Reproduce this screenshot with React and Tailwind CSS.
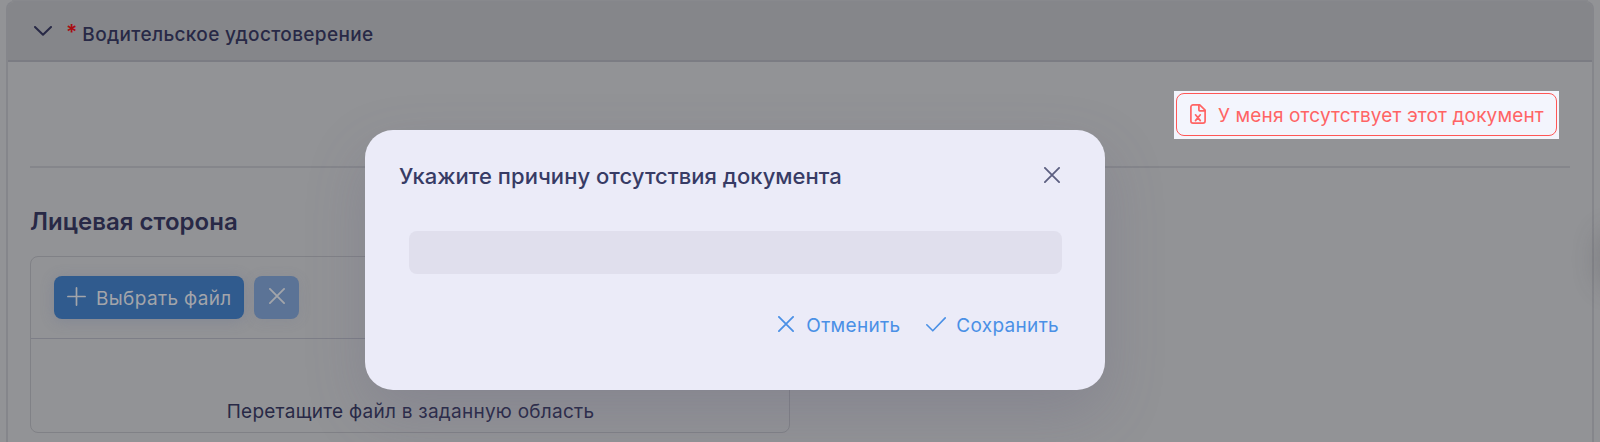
import React, { useState } from 'react';

const CloseIcon = ({ className, strokeWidth = 1.8 }) => (
    <svg className={className} viewBox="0 0 16 16" fill="none" stroke="currentColor" strokeWidth={strokeWidth} strokeLinecap="round"><path d="M.9 .9l14.2 14.2M15.1 .9L.9 15.1" /></svg>
);

const PlusIcon = () => (
    <svg className="w-[19px] h-[19px]" viewBox="0 0 19 19" fill="none" stroke="currentColor" strokeWidth="1.7" strokeLinecap="round"><path d="M9.5 .9v17.2M.9 9.5h17.2" /></svg>
);

const CheckIcon = () => (
    <svg className="w-5 h-[15px]" viewBox="0 0 20 15" fill="none" stroke="currentColor" strokeWidth="1.6" strokeLinecap="round" strokeLinejoin="round"><path d="M.8 7.8l6 6L19.2 .9" /></svg>
);

const ChevronIcon = () => (
    <svg className="w-[18px] h-[10px]" viewBox="0 0 18 10" fill="none" stroke="currentColor" strokeWidth="2" strokeLinecap="round" strokeLinejoin="round"><path d="M1 1l8 7.8L17 1" /></svg>
);

const FileExcelIcon = () => (
    <svg className="w-4 h-5" viewBox="0 0 16 20" fill="none" stroke="currentColor" strokeWidth="1.7" strokeLinecap="round" strokeLinejoin="round">
        <path d="M9.7 .9H3A2.1 2.1 0 0 0 .9 3v14A2.1 2.1 0 0 0 3 19.1h10a2.1 2.1 0 0 0 2.1-2.1V6.2L9.7 .9z" />
        <path d="M8.9 1v5a.8 .8 0 0 0 .8 .8H15M5.5 10.8l4.8 5.8M10.3 10.8l-4.8 5.8" />
    </svg>
);

const UploadCard = () => (
    <div className="w-[760px] h-[177px] border border-[#808186] rounded-lg">
        <div className="h-[82px] flex items-start gap-[10px] border-b border-[#7d7e87] pl-[23px] pt-[19px]">
            <button className="w-[190px] h-[43px] flex items-center rounded-lg bg-[#305b8e] pl-[13px] text-[#a3a5aa] shadow-[0_2px_14px_rgba(90,105,145,0.28)]">
                <span className="-mt-[2px]"><PlusIcon /></span>
                <span className="ml-[10px] mt-[2px] text-[19px] leading-6 tracking-[0.35px] whitespace-nowrap">Выбрать файл</span>
            </button>
            <button className="w-[45px] h-[43px] flex items-center justify-center rounded-lg bg-[#5b7396] text-[#a3a5aa] shadow-[0_2px_14px_rgba(90,105,145,0.14)]">
                <CloseIcon className="w-4 h-4 -mt-[3px]" />
            </button>
        </div>
        <div className="pt-[61px] pl-[1px] text-center text-[19px] leading-6 tracking-[0.25px] text-[#282946]">Перетащите файл в заданную область</div>
    </div>
);

const ReasonDialog = ({ reason, onChange }) => (
    <div className="absolute left-[365px] top-[130px] w-[740px] h-[260px] rounded-[28px] bg-[#ebebf8] pl-[34px] pr-[42px] shadow-[0_24px_60px_rgba(90,85,125,0.22)]">
        <div className="flex items-start justify-between pt-[31px]">
            <h2 className="text-[22px] leading-[30px] font-medium tracking-[0.04px] text-[#373b65]">Укажите причину отсутствия документа</h2>
            <button className="mt-[6px] mr-[3px] text-[#5c5f81]"><CloseIcon className="w-4 h-4" /></button>
        </div>
        <input
            value={reason}
            onChange={e => onChange(e.target.value)}
            className="block mt-[40px] ml-[10px] w-[653px] h-[43px] rounded-lg bg-[#e0dfed] px-3 outline-none"
        />
        <div className="mt-[40px] flex justify-end text-[19px] leading-6 tracking-[0.3px] text-[#4a90e6]">
            <button className="flex items-center">
                <CloseIcon className="w-4 h-4 -mt-[4px]" />
                <span className="ml-[12px]">Отменить</span>
            </button>
            <button className="ml-[26px] mr-[4px] flex items-center">
                <span className="-mt-[3px]"><CheckIcon /></span>
                <span className="ml-[10px]">Сохранить</span>
            </button>
        </div>
    </div>
);

const App = () => {
    const [reason, setReason] = useState('');

    return (
        <div className="relative h-[442px] overflow-hidden bg-[#929396] px-[6px] font-['Inter',sans-serif] text-[#282946]">
            {/* Bottom edge of the previous panel */}
            <div className="mx-[6px] h-px bg-[#88898d]" />

            <section className="h-[460px] border-x-2 border-t border-[#85868b] rounded-t-lg">
                <header className="h-[60px] flex items-start rounded-t-md border-b-2 border-[#7b7c83] bg-[#85868a] pl-[26px]">
                    <span className="mt-[24px]"><ChevronIcon /></span>
                    <span className="ml-[14px] mt-[19px] text-[21px] leading-6 font-semibold text-[#a90d12]">*</span>
                    <h1 className="ml-[5px] mt-[21px] text-[19px] leading-6 font-medium tracking-[0.35px]">Водительское удостоверение</h1>
                </header>

                <div className="px-[22px]">
                    <div className="flex h-[106px] items-start justify-end border-b-2 border-[#85868b] pt-[29px] pr-[11px]">
                        <div className="w-[385px] h-[48px] bg-[#f3f5fd] p-[2px]">
                            <button className="w-[381px] h-[43px] flex items-center rounded-lg border border-[#ff5757] pl-[13px] text-[#ff6464]">
                                <span className="-mt-[1px]"><FileExcelIcon /></span>
                                <span className="ml-[12px] mt-[2px] text-[19px] leading-6 tracking-[0.14px] whitespace-nowrap">У меня отсутствует этот документ</span>
                            </button>
                        </div>
                    </div>
                    <h2 className="mt-[39px] mb-[19px] text-[24px] leading-[30px] font-semibold tracking-[0.02px]">Лицевая сторона</h2>
                    <UploadCard />
                </div>
            </section>

            {/* Shadow of the side widget beyond the right edge */}
            <div className="absolute left-[1603px] top-[235px] w-6 h-12 rounded-full shadow-[0_0_24px_6px_rgba(70,70,80,0.25)]" />

            <ReasonDialog reason={reason} onChange={setReason} />
        </div>
    );
};

export default App;
